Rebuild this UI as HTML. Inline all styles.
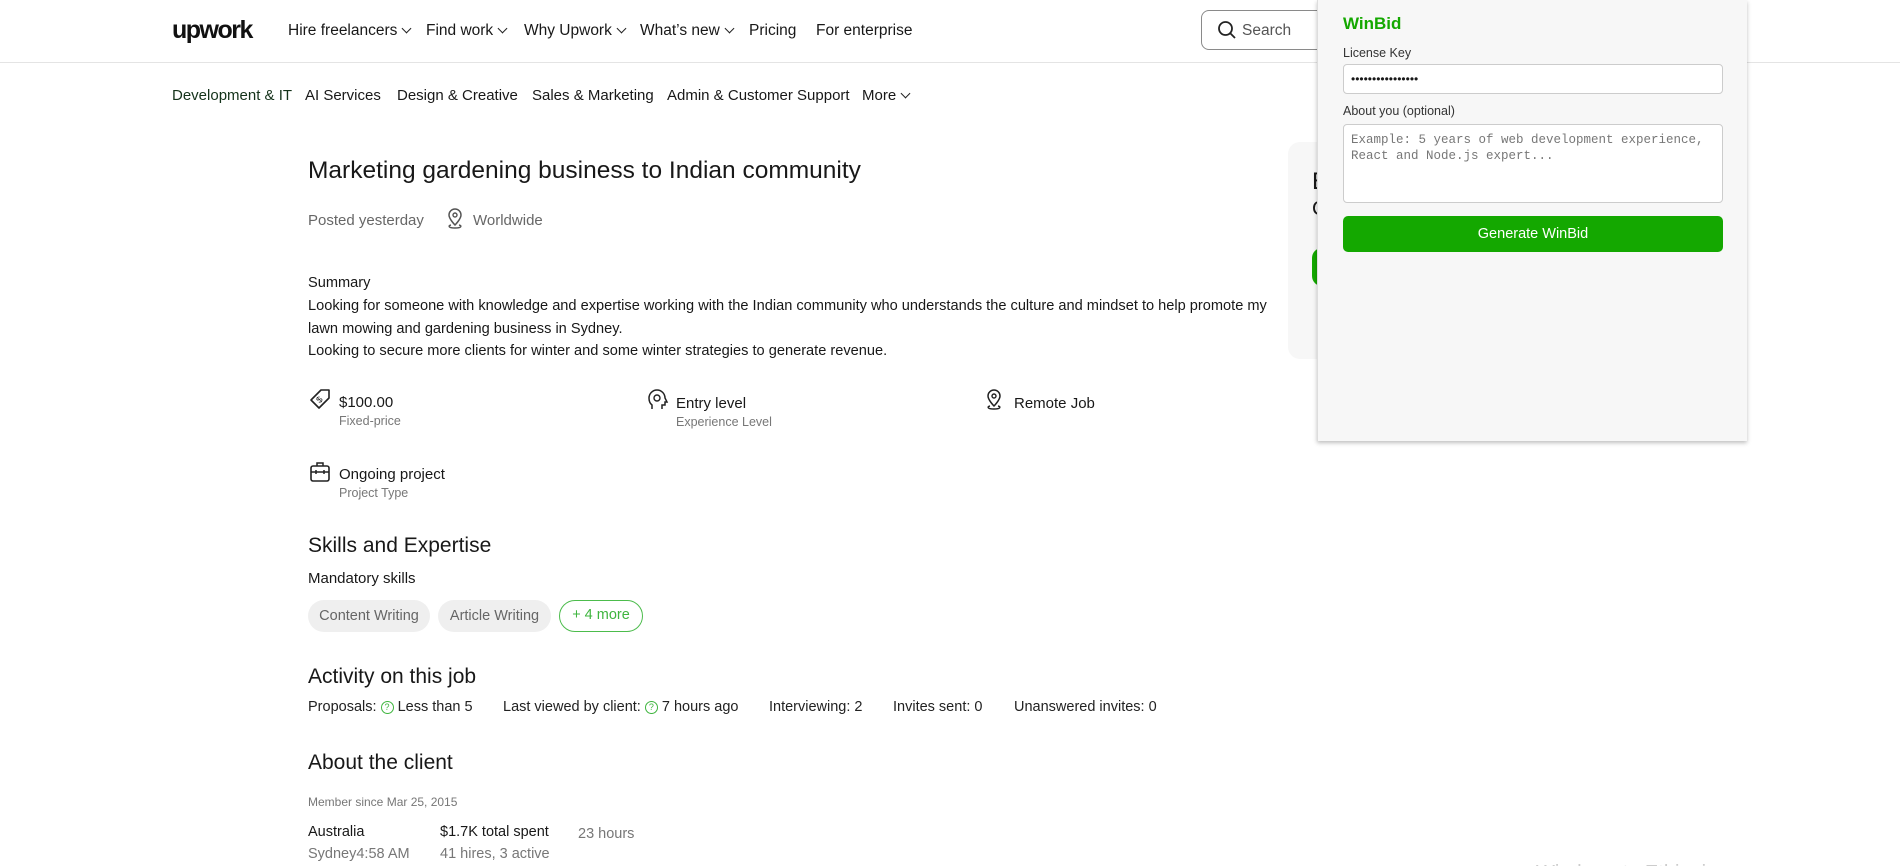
<!DOCTYPE html>
<html style="width:1900px;height:866px;overflow:hidden"><head><meta charset="utf-8"><style>
*{margin:0;padding:0;box-sizing:border-box}
body{width:1900px;height:866px;overflow:hidden;background:#fff;font-family:"Liberation Sans",Arial,sans-serif;color:#181818;position:relative}
.a{position:absolute;white-space:nowrap}
.nav{font-size:15.5px;color:#181818;top:21px;line-height:20px}
.cat{font-size:15px;color:#181818;top:86px;line-height:20px}
.chev{display:inline-block;width:7px;height:7px;border-right:1.5px solid #222;border-bottom:1.5px solid #222;transform:rotate(45deg);margin-left:6px;position:relative;top:-3px}
.grey{color:#676767}
.small{font-size:12.5px;color:#777}
.h2{font-size:21px;color:#181818}
.p{font-size:14.6px;line-height:22.5px}
</style></head><body>
<div class="a" style="left:172px;top:15px;font-size:25px;font-weight:bold;letter-spacing:-1.5px;color:#111;line-height:30px">upwork</div>
<div class="a nav" style="left:288px">Hire freelancers<span class="chev"></span></div>
<div class="a nav" style="left:426px">Find work<span class="chev"></span></div>
<div class="a nav" style="left:524px">Why Upwork<span class="chev"></span></div>
<div class="a nav" style="left:640px">What’s new<span class="chev"></span></div>
<div class="a nav" style="left:749px">Pricing</div>
<div class="a nav" style="left:816px">For enterprise</div>
<div class="a" style="left:1201px;top:10px;width:200px;height:40px;border:1.5px solid #8a8a8a;border-radius:8px"></div>
<svg class="a" style="left:1217px;top:20px" width="20" height="20" viewBox="0 0 20 20"><circle cx="8.5" cy="8.5" r="6.5" fill="none" stroke="#222" stroke-width="1.8"/><path d="M13 13l5 5" stroke="#222" stroke-width="1.8"/></svg>
<div class="a" style="left:1242px;top:22px;font-size:15.5px;color:#555">Search</div>
<div class="a" style="left:0;top:62px;width:1900px;height:1px;background:#e4e4e4"></div>
<div class="a cat" style="left:172px;color:#14321a">Development &amp; IT</div>
<div class="a cat" style="left:305px">AI Services</div>
<div class="a cat" style="left:397px">Design &amp; Creative</div>
<div class="a cat" style="left:532px">Sales &amp; Marketing</div>
<div class="a cat" style="left:667px">Admin &amp; Customer Support</div>
<div class="a cat" style="left:862px">More<span class="chev"></span></div>

<div class="a" style="left:308px;top:156px;font-size:24.5px;line-height:30px">Marketing gardening business to Indian community</div>
<div class="a grey" style="left:308px;top:212px;font-size:15px">Posted yesterday</div>
<svg class="a" style="left:445px;top:208px" width="20" height="22" viewBox="0 0 20 22"><path d="M10 17s-6-6-6-10a6 6 0 0 1 12 0c0 4-6 10-6 10z" fill="none" stroke="#555" stroke-width="1.5"/><circle cx="10" cy="7" r="2" fill="none" stroke="#555" stroke-width="1.4"/><path d="M6 17c-3 .5-3 3 4 3s7-2.5 4-3" fill="none" stroke="#555" stroke-width="1.4"/></svg>
<div class="a grey" style="left:473px;top:212px;font-size:15px">Worldwide</div>

<div class="a p" style="left:308px;top:272px">Summary</div>
<div class="a p" style="left:308px;top:295px">Looking for someone with knowledge and expertise working with the Indian community who understands the culture and mindset to help promote my<br>lawn mowing and gardening business in Sydney.<br>Looking to secure more clients for winter and some winter strategies to generate revenue.</div>

<svg class="a" style="left:309px;top:388px" width="22" height="22" viewBox="0 0 22 22"><path d="M12 2h8v8L10 20 2 12z" fill="none" stroke="#222" stroke-width="1.6" stroke-linejoin="round"/><text x="8" y="15" font-size="9" font-family="Liberation Sans" fill="#222" transform="rotate(-45 10 12)">$</text></svg>
<div class="a" style="left:339px;top:394px;font-size:15px">$100.00</div>
<div class="a small" style="left:339px;top:414px">Fixed-price</div>
<svg class="a" style="left:647px;top:389px" width="22" height="22" viewBox="0 0 22 22"><path d="M5 20v-4c-2-1.5-3-4-3-7a8 8 0 0 1 16 0l2 4h-2v3h-3v4" fill="none" stroke="#222" stroke-width="1.5"/><circle cx="10" cy="9" r="3" fill="none" stroke="#222" stroke-width="1.4"/></svg>
<div class="a" style="left:676px;top:395px;font-size:15px">Entry level</div>
<div class="a small" style="left:676px;top:415px">Experience Level</div>
<svg class="a" style="left:984px;top:389px" width="20" height="22" viewBox="0 0 20 22"><path d="M10 17s-6-6-6-10a6 6 0 0 1 12 0c0 4-6 10-6 10z" fill="none" stroke="#222" stroke-width="1.5"/><circle cx="10" cy="7" r="2" fill="none" stroke="#222" stroke-width="1.4"/><path d="M6 17c-3 .5-3 3 4 3s7-2.5 4-3" fill="none" stroke="#222" stroke-width="1.4"/></svg>
<div class="a" style="left:1014px;top:395px;font-size:15px">Remote Job</div>
<svg class="a" style="left:309px;top:461px" width="22" height="22" viewBox="0 0 22 22"><rect x="2" y="5" width="18" height="15" rx="2" fill="none" stroke="#222" stroke-width="1.6"/><path d="M8 5V2h6v3M2 11h18M7 9v4M15 9v4" fill="none" stroke="#222" stroke-width="1.5"/></svg>
<div class="a" style="left:339px;top:466px;font-size:15px">Ongoing project</div>
<div class="a small" style="left:339px;top:486px">Project Type</div>

<div class="a h2" style="left:308px;top:534px">Skills and Expertise</div>
<div class="a" style="left:308px;top:570px;font-size:15px">Mandatory skills</div>
<div class="a" style="left:308px;top:600px;width:122px;height:32px;border-radius:16px;background:#efefef;color:#666;font-size:14.5px;line-height:32px;text-align:center">Content Writing</div>
<div class="a" style="left:438px;top:600px;width:113px;height:32px;border-radius:16px;background:#efefef;color:#666;font-size:14.5px;line-height:32px;text-align:center">Article Writing</div>
<div class="a" style="left:559px;top:600px;width:84px;height:32px;border-radius:16px;border:1.5px solid #4cbc4c;color:#3fb53f;font-size:14.5px;line-height:29px;text-align:center">+ 4 more</div>

<div class="a h2" style="left:308px;top:665px">Activity on this job</div>
<div class="a" style="left:308px;top:699px;font-size:14.5px;color:#222">Proposals: <span style="color:#3fb53f;border:1.3px solid #3fb53f;border-radius:50%;display:inline-block;width:13px;height:13px;font-size:9px;line-height:11px;text-align:center;vertical-align:1px">?</span> Less than 5</div>
<div class="a" style="left:503px;top:699px;font-size:14.5px;color:#222">Last viewed by client: <span style="color:#3fb53f;border:1.3px solid #3fb53f;border-radius:50%;display:inline-block;width:13px;height:13px;font-size:9px;line-height:11px;text-align:center;vertical-align:1px">?</span> 7 hours ago</div>
<div class="a" style="left:769px;top:699px;font-size:14.5px;color:#222">Interviewing: 2</div>
<div class="a" style="left:893px;top:699px;font-size:14.5px;color:#222">Invites sent: 0</div>
<div class="a" style="left:1014px;top:699px;font-size:14.5px;color:#222">Unanswered invites: 0</div>

<div class="a h2" style="left:308px;top:751px">About the client</div>
<div class="a" style="left:308px;top:795px;font-size:12px;color:#777">Member since Mar 25, 2015</div>
<div class="a" style="left:308px;top:824px;font-size:14.5px">Australia</div>
<div class="a" style="left:308px;top:846px;font-size:14.5px;color:#777">Sydney4:58 AM</div>
<div class="a" style="left:440px;top:824px;font-size:14.5px">$1.7K total spent</div>
<div class="a" style="left:440px;top:846px;font-size:14.5px;color:#777">41 hires, 3 active</div>
<div class="a" style="left:578px;top:826px;font-size:14.5px;color:#777">23 hours</div>

<div class="a" style="left:1288px;top:142px;width:200px;height:217px;background:#f7f7f7;border-radius:12px"></div>
<div class="a" style="left:1312px;top:168px;font-size:24px">E</div>
<div class="a" style="left:1312px;top:198px;font-size:20px">C</div>
<div class="a" style="left:1312px;top:248px;width:60px;height:38px;background:#14a800;border-radius:10px"></div>

<div class="a" style="left:1317px;top:0;width:430px;height:441px;background:#f7f7f7;box-shadow:0 2px 4px rgba(0,0,0,.25);border-left:1px solid #ddd"></div>
<div class="a" style="left:1343px;top:14px;font-size:17px;font-weight:bold;color:#14a800">WinBid</div>
<div class="a" style="left:1343px;top:46px;font-size:12.5px;color:#333">License Key</div>
<div class="a" style="left:1343px;top:64px;width:380px;height:30px;background:#fff;border:1px solid #ccc;border-radius:4px;font-size:12px;line-height:28px;padding-left:7px;letter-spacing:0">••••••••••••••••</div>
<div class="a" style="left:1343px;top:104px;font-size:12.5px;color:#333">About you (optional)</div>
<div class="a" style="left:1343px;top:124px;width:380px;height:79px;background:#fff;border:1px solid #ccc;border-radius:4px;font-family:'Liberation Mono',monospace;font-size:12.5px;line-height:15.5px;color:#777;padding:8px 7px;white-space:normal">Example: 5 years of web development experience, React and Node.js expert...</div>
<div class="a" style="left:1343px;top:216px;width:380px;height:36px;background:#14a800;border-radius:5px;color:#fff;font-size:14.5px;line-height:36px;text-align:center">Generate WinBid</div>

<div class="a" style="left:1536px;top:862px;font-size:20px;color:#ccc">Windows to Ethiopia</div>
</body></html>
